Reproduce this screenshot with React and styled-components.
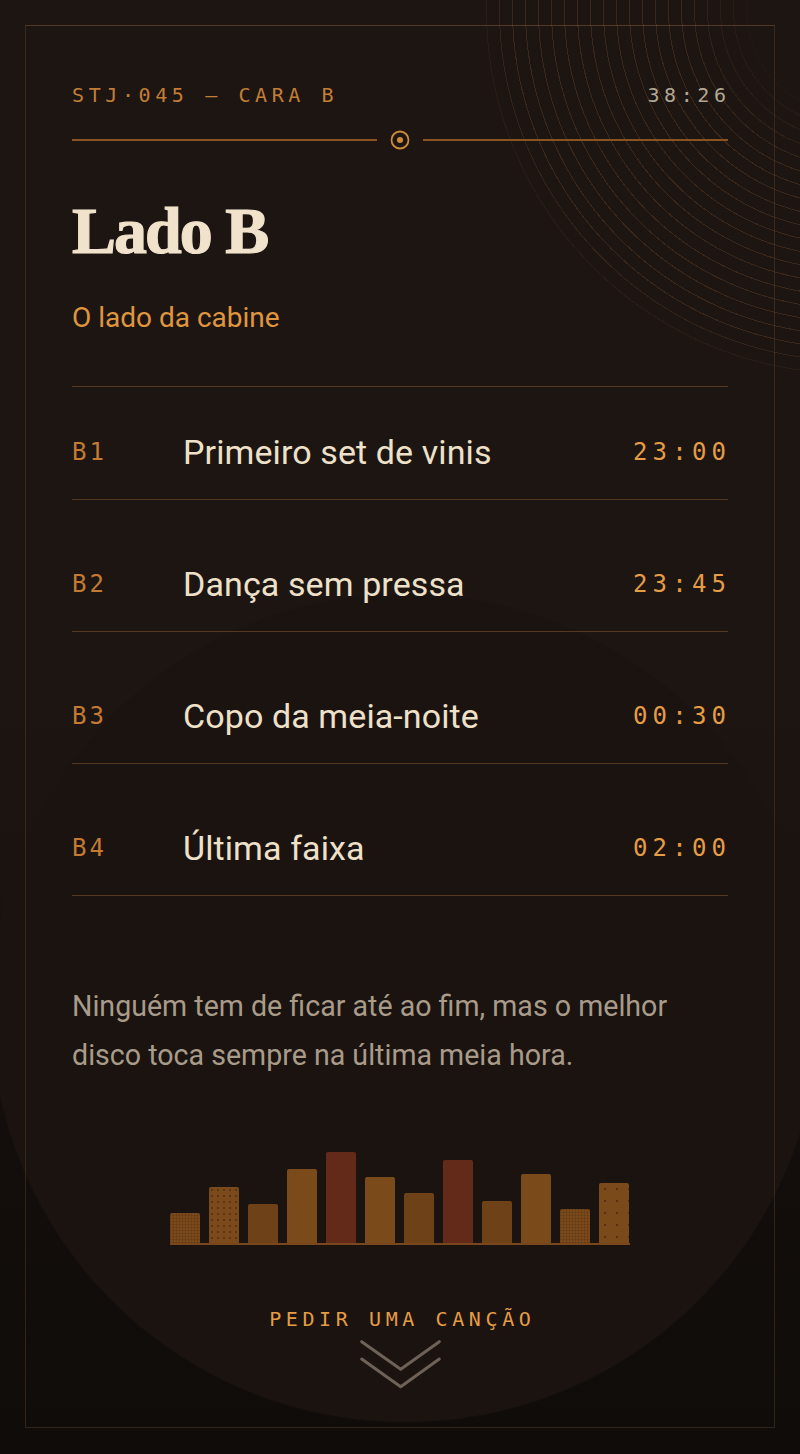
import React from "react";
import styled, { createGlobalStyle } from "styled-components";

const Global = createGlobalStyle`
  html, body { margin: 0; padding: 0; }
  body {
    background: #120d0b;
    font-family: Roboto, "Noto Sans", sans-serif;
    -webkit-font-smoothing: antialiased;
  }
`;

const MONO = `"DejaVu Sans Mono", "Liberation Mono", monospace`;

const Page = styled.div`
  position: relative;
  overflow: hidden;
  width: 800px;
  min-height: 1454px;
  box-sizing: border-box;
  padding: 25px 25px 26px;
  background:
    radial-gradient(circle 415px at 405px 1008px, #1a1310 0 99.6%, rgba(26, 19, 16, 0) 100%),
    linear-gradient(to bottom, #1c1512 0%, #1c1512 48%, #1a1310 60%, #130e0c 78%, #100c0a 100%);
`;

const Rings = styled.div`
  position: absolute;
  left: 430px;
  top: -360px;
  width: 840px;
  height: 740px;
  pointer-events: none;
  background: repeating-radial-gradient(
    circle at 420px 370px,
    rgba(0, 0, 0, 0) 0 12px,
    rgba(190, 120, 60, 0.2) 12px 13px
  );
  -webkit-mask-image: radial-gradient(circle at 420px 370px, rgba(0,0,0,0) 90px, rgba(0,0,0,1) 170px, rgba(0,0,0,1) 340px, rgba(0,0,0,0) 380px);
  mask-image: radial-gradient(circle at 420px 370px, rgba(0,0,0,0) 90px, rgba(0,0,0,1) 170px, rgba(0,0,0,1) 340px, rgba(0,0,0,0) 380px);
`;

const Frame = styled.main`
  position: relative;
  box-sizing: border-box;
  width: 750px;
  min-height: 1403px;
  border: 1px solid rgba(120, 84, 52, 0.32);
  border-top-color: rgba(150, 100, 58, 0.45);
  padding: 57px 46px 36px;
  display: flex;
  flex-direction: column;
`;

const TopBar = styled.header`
  display: flex;
  justify-content: space-between;
  align-items: center;
  height: 24px;
`;

const Code = styled.span`
  font-family: ${MONO};
  font-size: 20px;
  line-height: 24px;
  letter-spacing: 4.6px;
  margin-right: -2.6px;
  color: ${(p) => (p.$muted ? "#b3a794" : "#c47d36")};
`;

const Divider = styled.div`
  display: flex;
  align-items: center;
  gap: 13px;
  margin-top: 23px;
  height: 20px;
`;

const Rule = styled.span`
  flex: 1;
  height: 2px;
  background: #8a5220;
`;

const Title = styled.h1`
  margin: 48px 0 0;
  font-family: "Liberation Serif", "DejaVu Serif", serif;
  font-weight: 700;
  font-size: 66px;
  line-height: 66px;
  letter-spacing: -2px;
  color: #f0e2cb;
  -webkit-text-stroke: 1.2px #f0e2cb;
`;

const Subtitle = styled.p`
  margin: 37px 0 0;
  font-size: 28px;
  line-height: 34px;
  color: #e0963f;
  font-weight: 400;
`;

const TrackList = styled.ol`
  list-style: none;
  margin: 51px 0 0;
  padding: 0;
  border-top: 1px solid #553821;
`;

const Track = styled.li`
  display: grid;
  grid-template-columns: 111px 1fr auto;
  align-items: center;
  padding: ${(p) => (p.$first ? "45px" : "64px")} 0 27px;
  border-bottom: 1px solid #553821;
  height: 40px;
`;

const TrackNo = styled.span`
  font-family: ${MONO};
  font-size: 24px;
  letter-spacing: 3px;
  color: #c47a32;
`;

const TrackName = styled.span`
  font-size: 34px;
  line-height: 40px;
  color: #efe1c9;
  letter-spacing: 0.1px;
`;

const Duration = styled.span`
  font-family: ${MONO};
  font-size: 24px;
  letter-spacing: 5.2px;
  margin-right: -3.2px;
  color: #e59c45;
`;

const Note = styled.p`
  margin: 86px 0 0;
  font-size: 28.6px;
  line-height: 49px;
  color: #a99b89;
`;

const Chart = styled.div`
  align-self: center;
  margin-top: 71px;
  width: 460px;
  height: 92px;
  display: flex;
  align-items: flex-end;
  gap: 9px;
  border-bottom: 2px solid #7a461b;
`;

const textures = {
  none: "none",
  dots: "radial-gradient(circle, rgba(50,22,8,0.4) 0.8px, transparent 1.2px)",
  fine: "radial-gradient(circle, rgba(50,22,8,0.18) 0.7px, transparent 1px)",
  grid: "repeating-linear-gradient(90deg, rgba(50,22,8,0.18) 0 1px, transparent 1px 3px), repeating-linear-gradient(0deg, rgba(50,22,8,0.15) 0 1px, transparent 1px 3px)",
  sparse: "radial-gradient(circle, rgba(50,22,8,0.5) 0.9px, transparent 1.3px)",
};

const textureSize = { none: "auto", dots: "6px 6px", fine: "2px 2px", grid: "auto", sparse: "12px 12px" };

const Bar = styled.span`
  flex: 0 0 30px;
  height: ${(p) => p.$h}px;
  border-radius: 2px 2px 0 0;
  background-color: ${(p) => (p.$red ? "#632a19" : "#7b4a1b")};
  background-image: ${(p) => textures[p.$tex || "none"]};
  background-size: ${(p) => textureSize[p.$tex || "none"]};
`;

const Cta = styled.div`
  margin-top: 62px;
  display: flex;
  flex-direction: column;
  align-items: center;
  gap: 8px;
`;

const CtaLabel = styled.span`
  font-family: ${MONO};
  font-size: 20px;
  line-height: 24px;
  letter-spacing: 4.6px;
  margin-right: -4.6px;
  color: #e59c45;
`;

const tracks = [
  { no: "B1", name: "Primeiro set de vinis", time: "23:00" },
  { no: "B2", name: "Dança sem pressa", time: "23:45" },
  { no: "B3", name: "Copo da meia-noite", time: "00:30" },
  { no: "B4", name: "Última faixa", time: "02:00" },
];

const bars = [
  { h: 30, tex: "grid" },
  { h: 56, tex: "dots" },
  { h: 39, tex: "fine" },
  { h: 74 },
  { h: 91, red: true },
  { h: 66 },
  { h: 50, tex: "fine" },
  { h: 83, red: true },
  { h: 42, tex: "fine" },
  { h: 69 },
  { h: 34, tex: "grid" },
  { h: 60, tex: "sparse" },
];

export default function App() {
  return (
    <Page>
      <Global />
      <Rings />
      <Frame>
        <TopBar>
          <Code>STJ·045 — CARA B</Code>
          <Code $muted>38:26</Code>
        </TopBar>
        <Divider>
          <Rule />
          <svg width="20" height="20" viewBox="0 0 20 20" aria-hidden="true">
            <circle cx="10" cy="10" r="8.5" fill="none" stroke="#d08a3a" strokeWidth="1.8" />
            <circle cx="10" cy="10" r="3" fill="#d08a3a" />
          </svg>
          <Rule />
        </Divider>
        <Title>Lado B</Title>
        <Subtitle>O lado da cabine</Subtitle>
        <TrackList>
          {tracks.map((t, i) => (
            <Track key={t.no} $first={i === 0}>
              <TrackNo>{t.no}</TrackNo>
              <TrackName>{t.name}</TrackName>
              <Duration>{t.time}</Duration>
            </Track>
          ))}
        </TrackList>
        <Note>
          Ninguém tem de ficar até ao fim, mas o melhor disco toca sempre na última meia hora.
        </Note>
        <Chart>
          {bars.map((b, i) => (
            <Bar key={i} $h={b.h} $red={b.red} $tex={b.tex} />
          ))}
        </Chart>
        <Cta>
          <CtaLabel>PEDIR UMA CANÇÃO</CtaLabel>
          <svg width="82" height="50" viewBox="0 0 82 50" aria-hidden="true">
            <path d="M2.7 2.7 L41.7 30.3 L80.3 2.7 M2.7 20 L41.7 47.7 L80.3 20" fill="none" stroke="#6e6258" strokeWidth="3" strokeLinecap="round" strokeLinejoin="round" />
          </svg>
        </Cta>
      </Frame>
    </Page>
  );
}
